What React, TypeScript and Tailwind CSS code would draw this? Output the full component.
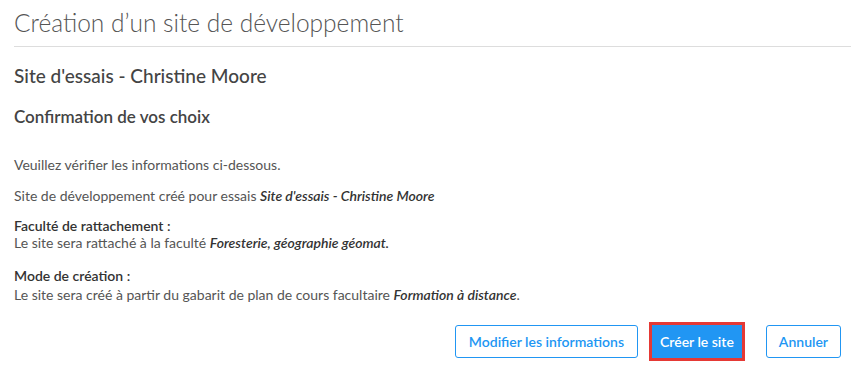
import React from 'react';

const font = { fontFamily: '"Source Sans Pro", Lato, "Noto Sans", sans-serif' };

function Field({ label, children, gap }: { label: string; children: React.ReactNode; gap: string }) {
  return (
    <div className={`${gap} text-[14px] leading-[17px]`}>
      <div className="font-semibold text-[#333]">{label}</div>
      <div className="text-[#555]">{children}</div>
    </div>
  );
}

export default function App() {
  return (
    <div className="w-[857px] h-[370px] bg-white px-[14px] pt-[5px]" style={font}>
      {/* titre */}
      <h1 className="text-[24.5px] leading-[36px] font-light text-[#555] pb-[5px] border-b border-[#ddd] mr-[-8px]">
        Création d’un site de développement
      </h1>

      <h2 className="mt-[18px] text-[19px] leading-[22px] font-medium text-[#444]">
        Site d'essais - Christine Moore
      </h2>
      <h3 className="mt-[20px] text-[17px] leading-[20px] font-semibold text-[#444]">
        Confirmation de vos choix
      </h3>

      <p className="mt-[29px] text-[14px] leading-[18px] text-[#555]">
        Veuillez vérifier les informations ci-dessous.
      </p>
      <p className="mt-[13px] text-[14px] leading-[18px] text-[#555]">
        Site de développement créé pour essais{' '}
        <em className="font-semibold text-[#333]">Site d'essais - Christine Moore</em>
      </p>

      <Field gap="mt-[12px]" label="Faculté de rattachement :">
        Le site sera rattaché à la faculté{' '}
        <em className="font-semibold text-[#333]">Foresterie, géographie géomat.</em>
      </Field>
      <Field gap="mt-[16px]" label="Mode de création :">
        <span className="block mt-[2px]">
          Le site sera créé à partir du gabarit de plan de cours facultaire{' '}
          <em className="font-semibold text-[#333]">Formation à distance</em>.
        </span>
      </Field>

      {/* actions */}
      <div className="mt-[19px] flex justify-end items-center pr-[2px]">
        <button className="h-[33px] px-[13px] rounded-[3px] border border-[#2196f3] bg-white text-[#2196f3] text-[14px] font-semibold">
          Modifier les informations
        </button>
        <div className="ml-[11px] mr-[21px] border-[3px] border-[#e53935]">
          <button className="block h-[33px] px-[8px] bg-[#2196f3] text-white text-[14px] font-semibold">
            Créer le site
          </button>
        </div>
        <button className="h-[33px] px-[12px] rounded-[3px] border border-[#2196f3] bg-white text-[#2196f3] text-[14px] font-semibold">
          Annuler
        </button>
      </div>
    </div>
  );
}
